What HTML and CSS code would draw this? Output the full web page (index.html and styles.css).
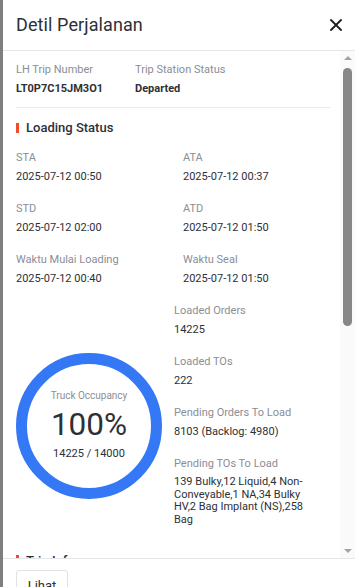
FILE: index.html
```html
<!DOCTYPE html>
<html lang="id">
<head>
<meta charset="utf-8">
<title>Detil Perjalanan</title>
<link rel="stylesheet" href="styles.css">
</head>
<body>
<div class="backdrop"></div>
<div class="drawer">
  <header class="drawer-header">
    <h1 class="title">Detil Perjalanan</h1>
    <button class="close" aria-label="Tutup">
      <svg width="12" height="12" viewBox="0 0 12 12"><path d="M1 1L11 11M11 1L1 11" stroke="#1d1d1f" stroke-width="1.8" stroke-linecap="round" fill="none"/></svg>
    </button>
  </header>
  <div class="body-wrap">
    <div class="scroll">
      <div class="trip-row">
        <div class="field trip-num">
          <div class="label">LH Trip Number</div>
          <div class="value strong">LT0P7C15JM3O1</div>
        </div>
        <div class="field">
          <div class="label">Trip Station Status</div>
          <div class="value strong">Departed</div>
        </div>
      </div>
      <div class="divider"></div>
      <h2 class="section-title">Loading Status</h2>
      <div class="grid">
        <div class="field"><div class="label">STA</div><div class="value">2025-07-12 00:50</div></div>
        <div class="field"><div class="label">ATA</div><div class="value">2025-07-12 00:37</div></div>
        <div class="field"><div class="label">STD</div><div class="value">2025-07-12 02:00</div></div>
        <div class="field"><div class="label">ATD</div><div class="value">2025-07-12 01:50</div></div>
        <div class="field"><div class="label">Waktu Mulai Loading</div><div class="value">2025-07-12 00:40</div></div>
        <div class="field"><div class="label">Waktu Seal</div><div class="value">2025-07-12 01:50</div></div>
      </div>
      <div class="occupancy">
        <div class="gauge">
          <div class="gauge-label">Truck Occupancy</div>
          <div class="gauge-pct">100%</div>
          <div class="gauge-count">14225 / 14000</div>
        </div>
        <div class="stats">
          <div class="field"><div class="label">Loaded Orders</div><div class="value">14225</div></div>
          <div class="field"><div class="label">Loaded TOs</div><div class="value">222</div></div>
          <div class="field"><div class="label">Pending Orders To Load</div><div class="value">8103 (Backlog: 4980)</div></div>
          <div class="field"><div class="label">Pending TOs To Load</div><div class="value multi">139 Bulky,12 Liquid,4 Non-Conveyable,1 NA,34 Bulky HV,2 Bag Implant (NS),258 Bag</div></div>
        </div>
      </div>
      <h2 class="section-title">Trip Info</h2>
      <div class="grid">
        <div class="field"><div class="label">Origin</div><div class="value">-</div></div>
      </div>
    </div>
    <div class="scrollbar">
      <div class="sb-arrow up"></div>
      <div class="sb-track"><div class="sb-thumb"></div></div>
      <div class="sb-arrow down"></div>
    </div>
  </div>
  <footer class="drawer-footer">
    <button class="btn">Lihat</button>
  </footer>
</div>
</body>
</html>
```

FILE: styles.css
```css
* { box-sizing: border-box; }
html, body {
  margin: 0;
  padding: 0;
  height: 587px;
  overflow: hidden;
}
body {
  display: flex;
  font-family: Roboto, "Noto Sans", "Liberation Sans", sans-serif;
  color: #2d3036;
  background: #fff;
}
.backdrop {
  width: 3px;
  flex: none;
  background: #7f7f7f;
}
.drawer {
  flex: 1;
  display: flex;
  flex-direction: column;
  background: #fff;
  height: 587px;
  min-width: 0;
}
.drawer-header {
  height: 51px;
  flex: none;
  display: flex;
  align-items: center;
  justify-content: space-between;
  padding: 0 13px 1px 13px;
  border-bottom: 1px solid #e5e6eb;
}
.title {
  margin: 0;
  font-size: 18px;
  font-weight: 400;
  color: #2d3036;
  letter-spacing: 0.1px;
}
.close {
  border: 0;
  background: none;
  padding: 0;
  width: 12px;
  height: 12px;
  display: flex;
  margin-top: 1px;
}
.body-wrap {
  height: 507px;
  flex: none;
  display: flex;
  overflow: hidden;
}
.scroll {
  flex: 1;
  min-width: 0;
  padding: 12px 10px 0 13px;
  overflow: hidden;
}
.field { display: flex; flex-direction: column; }
.label {
  font-size: 11px;
  line-height: 13px;
  color: #8a8e96;
  margin-bottom: 6px;
  white-space: nowrap;
}
.value {
  font-size: 11px;
  line-height: 13px;
  color: #2d3036;
  white-space: nowrap;
}
.value.strong { font-weight: 700; }
.value.multi { white-space: normal; line-height: 12.7px; }
.trip-row {
  display: flex;
}
.trip-num { width: 119px; flex: none; }
.divider {
  height: 1px;
  background: #e8e9ed;
  margin: 12px 0 0 0;
}
.section-title {
  margin: 12px 0 16px 0;
  font-size: 13px;
  line-height: 15px;
  font-weight: 500;
  color: #2d3036;
  display: flex;
  align-items: center;
  gap: 7px;
}
.section-title::before {
  content: "";
  width: 3px;
  height: 10px;
  background: #ee4d2d;
}
.grid {
  display: grid;
  grid-template-columns: 1fr 1fr;
  column-gap: 20px;
  row-gap: 19px;
}
.occupancy {
  display: flex;
  gap: 12px;
  margin-top: 19px;
}
.gauge {
  width: 146px;
  height: 146px;
  flex: none;
  border-radius: 50%;
  border: 11.5px solid #3478f6;
  margin-top: 49px;
  display: flex;
  flex-direction: column;
  align-items: center;
  justify-content: center;
  padding-bottom: 2px;
}
.gauge-label {
  font-size: 10px;
  line-height: 12px;
  color: #8a8e96;
}
.gauge-pct {
  font-size: 31.5px;
  line-height: 34px;
  color: #2d3036;
  margin-top: 6px;
}
.gauge-count {
  font-size: 11px;
  line-height: 13px;
  color: #2d3036;
  margin-top: 5px;
}
.stats {
  flex: 1;
  min-width: 0;
  display: flex;
  flex-direction: column;
  gap: 19px;
  padding-right: 8px;
}
.occupancy + .section-title { margin-top: 26px; }
.scrollbar {
  width: 15px;
  flex: none;
  background: #fafafa;
  display: flex;
  flex-direction: column;
  align-items: center;
}
.sb-arrow {
  width: 15px;
  height: 14px;
  flex: none;
  position: relative;
}
.sb-arrow::after {
  content: "";
  position: absolute;
  left: 3.5px;
  width: 0;
  height: 0;
  border-left: 4px solid transparent;
  border-right: 4px solid transparent;
}
.sb-arrow.up::after { top: 5px; border-bottom: 4px solid #a3a3a3; }
.sb-arrow.down::after { top: 5px; border-top: 4px solid #a3a3a3; }
.sb-track {
  flex: 1;
  width: 15px;
  display: flex;
  justify-content: center;
  padding-top: 3px;
}
.sb-thumb {
  width: 9px;
  height: 258px;
  border-radius: 5px;
  background: #878787;
}
.drawer-footer {
  flex: 1;
  border-top: 1px solid #e5e6eb;
  padding: 11px 13px 0 13px;
}
.btn {
  font-family: Roboto, "Noto Sans", sans-serif;
  font-size: 13px;
  line-height: 18px;
  color: #2d3036;
  background: #fff;
  border: 1px solid #e1e2e6;
  border-radius: 3px;
  width: 52px;
  height: 32px;
  padding: 6px 0 0 0;
  display: flex;
  justify-content: center;
  align-items: flex-start;
}
```
